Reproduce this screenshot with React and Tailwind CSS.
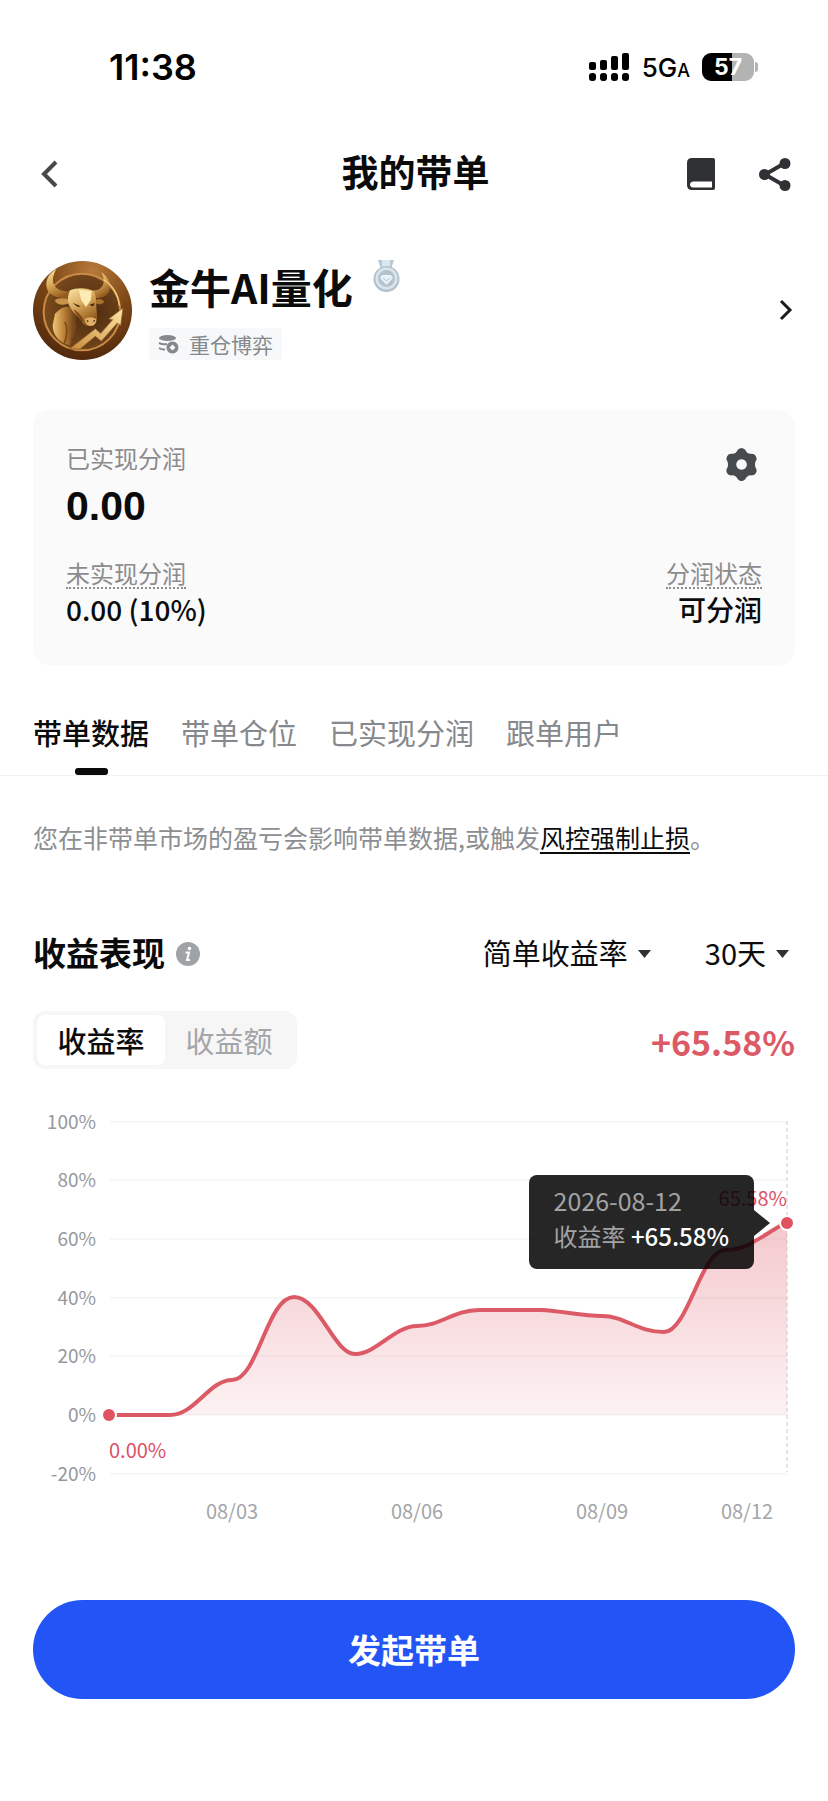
import { useState } from 'react'

const TABS = ['带单数据', '带单仓位', '已实现分润', '跟单用户']

const Y_AXIS = [
  { label: '100%', y: 21 },
  { label: '80%', y: 79 },
  { label: '60%', y: 138 },
  { label: '40%', y: 197 },
  { label: '20%', y: 255 },
  { label: '0%', y: 314 },
  { label: '-20%', y: 373 },
]

const X_AXIS = [
  { label: '08/03', x: 199 },
  { label: '08/06', x: 384 },
  { label: '08/09', x: 569 },
  { label: '08/12', x: 714 },
]

const LINE =
  'M75 314H137C162 314 176 279 199 279C225 279 234 196 261 196C286 196 301 253 322 253C344 253 361 225 384 225C408 225 420 209 446 209H508C530 210 548 215 569 215C592 215 604 231 631 231C655 231 668 149 692 149C715 149 728 135 754 121'

function StatusBar() {
  return (
    <div className="flex h-[134px] items-center justify-between pr-[70px] pl-[109px] font-['Inter','Noto_Sans_CJK_SC',sans-serif] text-black">
      <span className="text-[36px] font-semibold">11:38</span>
      <div className="flex items-center gap-3">
        <svg className="h-7 w-[41px]" viewBox="0 0 41 28">
          <rect x="0" y="9" width="7" height="8" rx="2" />
          <rect x="11" y="7" width="7" height="10" rx="2" />
          <rect x="22" y="3" width="7" height="14" rx="2" />
          <rect x="33" y="0" width="7" height="17" rx="2" />
          <rect x="0" y="20" width="7" height="8" rx="3" />
          <rect x="11" y="20" width="7" height="8" rx="3" />
          <rect x="22" y="20" width="7" height="8" rx="3" />
          <rect x="33" y="20" width="7" height="8" rx="3" />
        </svg>
        <span className="text-[26px] font-medium">
          5G<span className="text-lg">A</span>
        </span>
        <div className="flex items-center gap-px">
          <div className="flex h-7 w-[52px] items-center justify-center rounded-[9px] bg-linear-to-r from-black from-57% to-[#b3b3b3] to-57% text-[23px] font-bold text-white">
            57
          </div>
          <div className="h-[10px] w-[3px] rounded-r-full bg-[#b3b3b3]" />
        </div>
      </div>
    </div>
  )
}

function Header() {
  return (
    <header className="grid h-20 grid-cols-[1fr_auto_1fr] items-center pr-[37px] pl-[40px]">
      <button aria-label="返回" className="justify-self-start">
        <svg className="h-8 w-5" viewBox="0 0 20 32" fill="none">
          <path d="M16 4L4 16L16 28" stroke="#46484c" strokeWidth="4" />
        </svg>
      </button>
      <h1 className="pb-[6px] text-[37px] leading-10 font-bold">我的带单</h1>
      <div className="flex items-center gap-11 justify-self-end text-[#2f3134]">
        <button aria-label="教程">
          <svg className="h-8 w-7" viewBox="0 0 28 32" fill="currentColor">
            <path
              fillRule="evenodd"
              d="M5 0H26Q28 0 28 2V30Q28 32 26 32H5Q0 32 0 27V5Q0 0 5 0ZM6 23.500Q3 24 3 26.500Q3 29 6 29.500H25V23.500Z"
            />
          </svg>
        </button>
        <button aria-label="分享">
          <svg className="h-[33px] w-8" viewBox="0 0 32 33" fill="currentColor">
            <path d="M26 5L6 16.500L26 28" fill="none" stroke="currentColor" strokeWidth="4" />
            <circle cx="26" cy="5.500" r="5.500" />
            <circle cx="5.500" cy="16.500" r="5.500" />
            <circle cx="26" cy="27.500" r="5.500" />
          </svg>
        </button>
      </div>
    </header>
  )
}

function Avatar() {
  return (
    <svg className="size-[99px] shrink-0" viewBox="39 32 297 297">
      <defs>
        <radialGradient id="coin" cx="0.6" cy="0.1" r="1">
          <stop offset="0" stopColor="#b8793a" />
          <stop offset="0.45" stopColor="#7d4716" />
          <stop offset="1" stopColor="#4a240b" />
        </radialGradient>
        <radialGradient id="inner" cx="0.6" cy="0.5" r="0.6">
          <stop offset="0" stopColor="#4a2a10" />
          <stop offset="1" stopColor="#7a4a1c" />
        </radialGradient>
        <linearGradient id="gold" x1="0" y1="0" x2="0.5" y2="1">
          <stop offset="0" stopColor="#fbe6a8" />
          <stop offset="0.5" stopColor="#d9a85a" />
          <stop offset="1" stopColor="#925a1c" />
        </linearGradient>
        <linearGradient id="neck" x1="0" y1="0" x2="1" y2="0">
          <stop offset="0" stopColor="#f0c878" />
          <stop offset="0.5" stopColor="#b57a32" />
          <stop offset="1" stopColor="#5a3411" />
        </linearGradient>
        <linearGradient id="arrow" x1="0" y1="1" x2="1" y2="0">
          <stop offset="0" stopColor="#c98a3c" />
          <stop offset="1" stopColor="#ffe7a6" />
        </linearGradient>
      </defs>
      <circle cx="187.500" cy="180.500" r="148.500" fill="url(#coin)" />
      <circle cx="186" cy="185" r="115" fill="url(#inner)" stroke="#c98b45" strokeWidth="6" />
      <path d="M105 190C130 165 150 160 172 190C165 225 160 250 150 285C120 280 98 255 98 225Z" fill="url(#neck)" />
      <path d="M135 215C145 235 140 260 132 282M160 205C170 230 165 250 152 270" fill="none" stroke="#7d4b1a" strokeWidth="5" />
      <path
        d="M109 57C73 75 68 122 102 137C122 145 142 144 160 142L162 122C138 126 110 122 101 101C96 88 101 70 109 57Z"
        fill="url(#gold)"
      />
      <path
        d="M244 66C256 89 254 111 232 119L212 121L214 142C235 146 259 143 268 122C276 100 261 77 244 66Z"
        fill="url(#gold)"
      />
      <path d="M148 146C128 142 110 142 104 151C112 164 130 167 148 158Z" fill="#c8924a" />
      <path d="M228 148C238 143 248 147 253 154C245 164 234 163 226 158Z" fill="#a8712c" />
      <path
        d="M150 120C170 111 205 112 222 124C231 142 228 164 230 182C232 200 233 218 221 224C210 229 194 228 188 218C180 200 160 190 150 170C140 155 144 132 150 120Z"
        fill="url(#gold)"
      />
      <path d="M176 118L215 122L212 150L198 170L184 150Z" fill="#fdebb5" />
      <path d="M157 157L182 168L174 170Z M208 164L224 158L219 168Z" fill="#3a1c07" />
      <path d="M160 176C178 188 186 198 192 214L184 212C178 198 166 190 160 176Z" fill="#7b4716" />
      <path d="M194 207C199 200 222 200 229 207C229 218 224 227 211 227C201 226 195 218 194 207Z" fill="#e0b06a" />
      <path d="M199 209L207 212L202 216Z M218 212L226 208L223 215Z" fill="#4a260a" />
      <path
        d="M148 296L226 235L242 249L278 208L266 206L309 173L302 226L292 218L244 273L226 258L180 296Z"
        fill="url(#arrow)"
        stroke="#8a5520"
        strokeWidth="2"
      />
      <path d="M251 88C280 107 295 136 298 166" fill="none" stroke="#f4cc80" strokeWidth="4" />
    </svg>
  )
}

function Medal() {
  return (
    <svg className="h-8 w-7" viewBox="0 0 28 32">
      <path d="M5 0H21L18 9H8Z" fill="#b8c8d4" />
      <path d="M9 0H17V8H9Z" fill="#dce8f0" />
      <circle cx="13.500" cy="19" r="13" fill="#b3c1cc" />
      <circle cx="13.500" cy="18.500" r="11" fill="#dbe5ec" />
      <circle cx="13.500" cy="18.500" r="8.500" fill="#b4c2cd" />
      <path d="M9 15H18L20 18L13.500 25L7 18Z" fill="#e9f3fa" />
      <path d="M10 18L13.500 21L17 18" fill="none" stroke="#b4c2cd" strokeWidth="1" />
    </svg>
  )
}

function Profile() {
  return (
    <section className="mt-[46px] flex items-center px-[33px]">
      <Avatar />
      <div className="ml-[17px] flex flex-1 flex-col">
        <div className="flex gap-5">
          <h2 className="text-[41px] leading-[52px] font-bold">金牛AI量化</h2>
          <Medal />
        </div>
        <div className="mt-4 flex h-8 items-center gap-[10px] self-start rounded-sm bg-[#f7f8f9] px-[9px] text-[#85888c]">
          <svg className="h-[19px] w-[21px]" viewBox="0 0 21 19" fill="currentColor">
            <ellipse cx="9.500" cy="3" rx="8.500" ry="3" />
            <path d="M1 8Q5 10 9 9M1 13Q4 15 7 14.500" fill="none" stroke="currentColor" strokeWidth="2" />
            <path
              fillRule="evenodd"
              d="M14.500 6.500A6 6 0 1 1 14.400 6.500ZM14.500 9.500L11.500 12.500L14.500 15.500L17.500 12.500Z"
            />
          </svg>
          <span className="text-[21px] leading-7">重仓博弈</span>
        </div>
      </div>
      <button aria-label="查看主页">
        <svg className="h-6 w-[18px]" viewBox="0 0 18 24" fill="none">
          <path d="M4 3L13 12L4 21" stroke="#1c1d1f" strokeWidth="3" />
        </svg>
      </button>
    </section>
  )
}

function ProfitCard() {
  return (
    <section className="mx-[33px] mt-[50px] rounded-2xl bg-[#fafafa] px-[33px] pt-8 pb-9">
      <div className="flex justify-between">
        <div>
          <div className="text-[24px] leading-8 text-[#8c8c8e]">已实现分润</div>
          <div className="mt-2 font-['Liberation_Sans',sans-serif] text-[41px] leading-[48px] font-bold">0.00</div>
        </div>
        <button aria-label="设置" className="mt-[6px] mr-[5px] self-start text-[#484b4e]">
          <svg className="h-[33px] w-[31px]" viewBox="0 0 31 33" fill="currentColor">
            <path
              fillRule="evenodd"
              d="M12 1.500Q15.500 -1.500 19 1.500Q21 6 25 5.700Q29.500 5.500 30.500 10Q31 11.500 29.500 13.500Q28.500 16.500 29.500 19.500Q31.500 22 30 25Q28.500 28 24.500 27.300Q21 27.500 19 31.500Q15.500 34.500 12 31.500Q10 27.500 6.500 27.300Q2.500 28 1 25Q-0.500 22 1.500 19.500Q2.500 16.500 1.500 13.500Q0 11.500 0.500 10Q1.500 5.500 6 5.700Q10 6 12 1.500ZM15.500 11.200A5.300 5.300 0 1 0 15.600 11.200Z"
            />
          </svg>
        </button>
      </div>
      <div className="mt-7 flex justify-between">
        <div className="flex flex-col items-start">
          <div className="border-b-2 border-dotted border-[#8c8c8e] text-[24px] leading-[29px] text-[#8c8c8e]">
            未实现分润
          </div>
          <div className="text-[28px] leading-10 font-medium">0.00 (10%)</div>
        </div>
        <div className="flex flex-col items-end">
          <div className="border-b-2 border-dotted border-[#8c8c8e] text-[24px] leading-[29px] text-[#8c8c8e]">
            分润状态
          </div>
          <div className="text-[28px] leading-10 font-medium">可分润</div>
        </div>
      </div>
    </section>
  )
}

function Caret() {
  return (
    <svg className="mt-1 h-2 w-[13px]" viewBox="0 0 13 8" fill="#2f3134">
      <path d="M0 0H13L6.500 8Z" />
    </svg>
  )
}

function Dropdown({ label, options }) {
  return (
    <label className="flex items-center gap-[10px]">
      <select aria-label={label} className="field-sizing-content appearance-none bg-transparent text-[29px] leading-10">
        {options.map((option) => (
          <option key={option}>{option}</option>
        ))}
      </select>
      <Caret />
    </label>
  )
}

function ProfitChart() {
  return (
    <div className="relative mt-8">
      <svg className="block w-full" viewBox="0 0 762 430">
        <defs>
          <linearGradient id="area" x1="0" y1="0" x2="0" y2="1">
            <stop offset="0" stopColor="#dc5562" stopOpacity="0.320" />
            <stop offset="1" stopColor="#dc5562" stopOpacity="0.080" />
          </linearGradient>
        </defs>
        {Y_AXIS.map(({ label, y }) => (
          <g key={label}>
            <line x1="77" x2="754" y1={y} y2={y} stroke="#f7f7f8" strokeWidth="2" />
            <text x="63" y={y + 7} textAnchor="end" fontSize="19" fill="#96989c">
              {label}
            </text>
          </g>
        ))}
        {X_AXIS.map(({ label, x }) => (
          <text key={label} x={x} y="418" textAnchor="middle" fontSize="20" fill="#a3a5a8">
            {label}
          </text>
        ))}
        <path d={`${LINE}V314H75Z`} fill="url(#area)" />
        <line x1="754" x2="754" y1="20" y2="371" stroke="#c8c9cb" strokeDasharray="4 3" />
        <path d={LINE} fill="none" stroke="#dc5a66" strokeWidth="4" />
        <circle cx="76" cy="314" r="7" fill="#e0525f" stroke="#fff" strokeWidth="2" />
        <circle cx="754" cy="122" r="7" fill="#e0525f" stroke="#fff" strokeWidth="2" />
        <text x="76" y="357" fontSize="20" fill="#dc5068">
          0.00%
        </text>
        <text x="754" y="105" textAnchor="end" fontSize="20" fill="#dc5068">
          65.58%
        </text>
      </svg>
      <div className="absolute top-[74px] right-[41px] rounded-lg bg-black/85 px-[25px] pt-2 pb-4 leading-[35px]">
        <div className="text-[25px] text-[#a2a2a4]">2026-08-12</div>
        <div className="text-[24px] font-medium text-white">
          <span className="font-normal text-[#a2a2a4]">收益率</span> +65.58%
        </div>
        <svg className="absolute top-[35px] -right-4 h-[26px] w-4" viewBox="0 0 16 26">
          <path d="M0 0L16 13L0 26Z" fillOpacity="0.850" />
        </svg>
      </div>
    </div>
  )
}

function App() {
  const [tab, setTab] = useState(TABS[0])
  const [mode, setMode] = useState('收益率')

  return (
    <main className="min-h-screen bg-white font-['Noto_Sans_CJK_SC',sans-serif] text-[#0b0b0c]">
      <StatusBar />
      <Header />
      <Profile />
      <ProfitCard />

      <nav className="mt-[47px] flex gap-8 border-b border-[#f2f2f3] px-[33px]">
        {TABS.map((name) => (
          <button
            key={name}
            onClick={() => setTab(name)}
            className={`flex flex-col items-center gap-4 text-[29px] leading-10 ${
              tab === name ? 'font-medium' : 'text-[#85888c]'
            }`}
          >
            {name}
            {tab === name && <span className="h-[7px] w-[33px] rounded-[3px] bg-[#0b0b0c]" />}
          </button>
        ))}
      </nav>

      <div className="px-[33px] pb-[103px]">
        <p className="mt-[43px] text-[25px] leading-9 whitespace-nowrap text-[#8c8e91]">
          您在非带单市场的盈亏会影响带单数据,或触发
          <a href="#risk" className="text-[#0b0b0c] underline decoration-2 underline-offset-4">
            风控强制止损
          </a>
          。
        </p>

        <div className="mt-[77px] flex items-center justify-between">
          <div className="flex items-center gap-[11px]">
            <h3 className="text-[33px] leading-10 font-bold">收益表现</h3>
            <button aria-label="说明">
              <svg className="mt-1 size-6" viewBox="0 0 24 24">
                <circle cx="12" cy="12" r="12" fill="#a0a3a5" />
                <circle cx="13.500" cy="6.500" r="1.800" fill="#fff" />
                <path d="M9.500 10.500H13L11 18H14" fill="none" stroke="#fff" strokeWidth="2" />
              </svg>
            </button>
          </div>
          <div className="flex gap-[54px] pr-[6px]">
            <Dropdown label="收益类型" options={['简单收益率', '时间加权收益率']} />
            <Dropdown label="时间范围" options={['30天', '7天', '90天']} />
          </div>
        </div>

        <div className="mt-[39px] flex items-center justify-between">
          <div className="flex rounded-xl bg-[#f6f6f7] p-1">
            {['收益率', '收益额'].map((name) => (
              <button
                key={name}
                onClick={() => setMode(name)}
                className={`h-[50px] w-32 rounded-lg text-[29px] leading-10 ${
                  mode === name ? 'bg-white font-medium' : 'text-[#a3a5a8]'
                }`}
              >
                {name}
              </button>
            ))}
          </div>
          <div className="pt-1 text-[34px] leading-10 font-bold text-[#dc5a66]">+65.58%</div>
        </div>

        <ProfitChart />

        <button className="mt-[69px] h-[99px] w-full rounded-full bg-[#2354f6] text-[33px] font-bold text-white">
          发起带单
        </button>
      </div>
    </main>
  )
}

export default App
